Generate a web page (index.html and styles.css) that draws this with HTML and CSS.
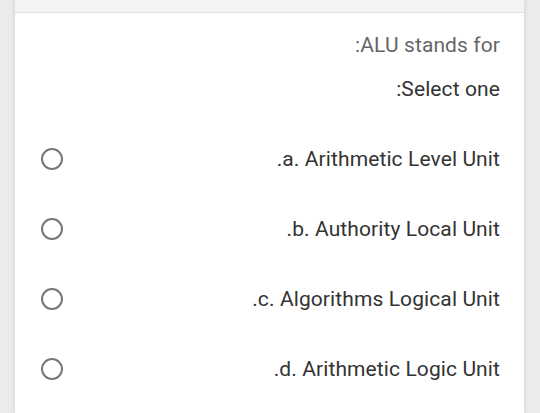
FILE: index.html
```html
<!DOCTYPE html>
<html>
<head>
<meta charset="utf-8">
<link rel="stylesheet" href="styles.css">
</head>
<body>
<div class="card">
  <div class="card-top"></div>
  <div class="content">
    <div class="qtext">:ALU stands for</div>
    <div class="prompt">:Select one</div>
    <div class="answers">
      <div class="option"><span class="radio"></span><span class="label">.a. Arithmetic Level Unit</span></div>
      <div class="option"><span class="radio"></span><span class="label">.b. Authority Local Unit</span></div>
      <div class="option"><span class="radio"></span><span class="label">.c. Algorithms Logical Unit</span></div>
      <div class="option"><span class="radio"></span><span class="label">.d. Arithmetic Logic Unit</span></div>
    </div>
    <div class="next-edge"></div>
  </div>
</div>
</body>
</html>
```

FILE: styles.css
```css
html, body {
  margin: 0;
  padding: 0;
  background: #ebebeb;
  height: 100%;
  overflow: hidden;
}
body {
  padding-left: 15px;
  font-family: Roboto, "Liberation Sans", sans-serif;
}
.card {
  width: 509px;
  height: 100%;
  background: #ffffff;
  box-shadow: -2px 0 3px rgba(0,0,0,0.06), 2px 0 3px rgba(0,0,0,0.06);
}
.card-top {
  height: 12px;
  background: #f4f4f4;
  border-bottom: 1px solid #e2e2e2;
}
.content {
  padding: 20px 24px 0 26px;
}
.qtext, .prompt {
  font-size: 21px;
  line-height: 24px;
  text-align: right;
  letter-spacing: 0.1px;
}
.qtext {
  color: #666666;
}
.prompt {
  color: #333333;
  margin-top: 20px;
}
.answers {
  margin-top: 23px;
  display: flex;
  flex-direction: column;
}
.option {
  height: 70px;
  display: flex;
  align-items: center;
  justify-content: space-between;
}
.radio {
  width: 18px;
  height: 18px;
  border: 2.4px solid #777777;
  border-radius: 50%;
  flex: none;
}
.label {
  font-size: 21px;
  line-height: 24px;
  letter-spacing: 0.1px;
  color: #333333;
}
.next-edge {
  margin: 13px -9px 0 4px;
  border-top: 2px solid #f2f2f2;
}
```
